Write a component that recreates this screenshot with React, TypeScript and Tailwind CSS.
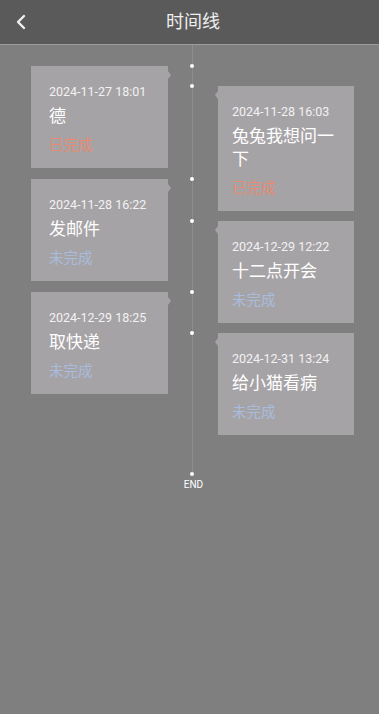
import { ChevronLeft } from 'lucide-react';

interface Item {
  time: string;
  title: string;
  done: boolean;
}

const leftItems: Item[] = [
  { time: '2024-11-27 18:01', title: '德', done: true },
  { time: '2024-11-28 16:22', title: '发邮件', done: false },
  { time: '2024-12-29 18:25', title: '取快递', done: false },
];

const rightItems: Item[] = [
  { time: '2024-11-28 16:03', title: '兔兔我想问一下', done: true },
  { time: '2024-12-29 12:22', title: '十二点开会', done: false },
  { time: '2024-12-31 13:24', title: '给小猫看病', done: false },
];

function Card({ item, side }: { item: Item; side: 'left' | 'right' }) {
  return (
    <div
      className={`relative bg-[#a6a3a6] pt-[18px] pb-[13px] ${
        side === 'left' ? 'w-[137px] pl-[18px] pr-[10px]' : 'w-[136px] pl-[14px] pr-[14px]'
      }`}
    >
      {/* Arrow toward the line */}
      {side === 'left' ? (
        <div className="absolute top-[5px] -right-[3px] w-0 h-0 border-y-[4px] border-y-transparent border-l-[3px] border-l-[#a6a3a6]" />
      ) : (
        <div className="absolute top-[5px] -left-[3px] w-0 h-0 border-y-[4px] border-y-transparent border-r-[3px] border-r-[#a6a3a6]" />
      )}
      {/* Dot on the line */}
      <div
        className={`absolute -top-[2px] w-[4px] h-[4px] rounded-full bg-white ${
          side === 'left' ? '-right-[26px]' : '-left-[28px]'
        }`}
      />
      <div className="text-[12.5px] leading-[16px] text-[#f2f2f2]">{item.time}</div>
      <div className="mt-[5px] text-[17px] leading-[23px] text-white">{item.title}</div>
      <div
        className={`mt-[9px] text-[14.5px] leading-[18px] ${
          item.done ? 'text-[#e58b72]' : 'text-[#a9bcdc]'
        }`}
      >
        {item.done ? '已完成' : '未完成'}
      </div>
    </div>
  );
}

export default function App() {
  return (
    <div
      className="w-[379px] min-h-[714px] bg-[#7f7f7f] flex flex-col"
      style={{ fontFamily: 'Roboto, "Noto Sans CJK SC", sans-serif' }}
    >
      {/* Header */}
      <div className="h-[45px] bg-[#5a5a5a] border-b border-[#9c9c9c] flex items-center relative">
        <button className="pl-[9px] text-[#f0f0f0]">
          <ChevronLeft size={24} strokeWidth={2.4} />
        </button>
        <div className="absolute left-[166px] top-[10px] text-[18px] leading-[24px] text-[#eeeeee]">
          时间线
        </div>
      </div>

      {/* Timeline */}
      <div className="flex">
        <div className="w-[168px] pl-[31px] pt-[21px] flex flex-col gap-[11px]">
          {leftItems.map((it) => (
            <Card key={it.time} item={it} side="left" />
          ))}
        </div>
        <div className="w-[50px] flex flex-col">
          <div className="ml-[24px] w-px flex-1 bg-[#8d8d8d]" />
          <div className="ml-[22px] w-[4px] h-[4px] rounded-full bg-white" />
          <div className="text-center pl-[1px] text-[10px] leading-[14px] text-white mt-[2px]">END</div>
        </div>
        <div className="w-[136px] pt-[41px] pb-[57px] flex flex-col gap-[10px]">
          {rightItems.map((it) => (
            <Card key={it.time} item={it} side="right" />
          ))}
        </div>
      </div>
    </div>
  );
}
